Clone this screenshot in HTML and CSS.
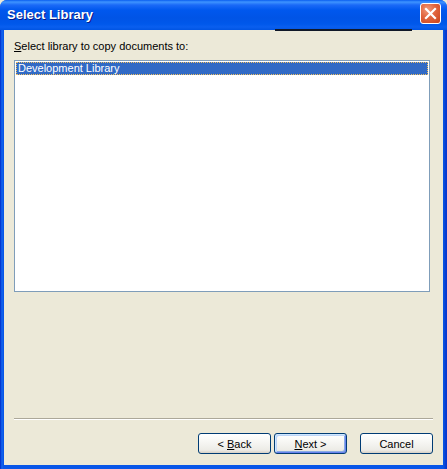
FILE: index.html
```html
<!DOCTYPE html>
<html>
<head>
<meta charset="utf-8">
<link rel="stylesheet" href="styles.css">
</head>
<body>
<div class="window">
  <div class="titlebar">
    <span class="title">Select Library</span>
    <span class="close">
      <svg width="13" height="13" viewBox="0 0 13 13"><path d="M2 2 L11 11 M11 2 L2 11" stroke="#fff" stroke-width="2.2" stroke-linecap="square"/></svg>
    </span>
  </div>
  <div class="frame">
    <div class="client">
      <div class="glitch"></div>
      <div class="label"><u>S</u>elect library to copy documents to:</div>
      <div class="list">
        <div class="item">Development Library</div>
      </div>
      <div class="spacer"></div>
      <div class="separator"></div>
      <div class="buttons">
        <button class="btn">&lt; <u>B</u>ack</button>
        <button class="btn default"><u>N</u>ext &gt;</button>
        <button class="btn cancel">Cancel</button>
      </div>
    </div>
  </div>
</div>
</body>
</html>
```
FILE: styles.css
```css
html, body {
  margin: 0;
  padding: 0;
  background: #ece9d8;
}
body {
  width: 447px;
  height: 469px;
  overflow: hidden;
  font-family: "Liberation Sans", Arial, sans-serif;
  font-size: 11px;
}
.window {
  width: 447px;
  height: 469px;
  display: flex;
  flex-direction: column;
  background: #0855dd;
  border-radius: 7px 7px 0 0;
  overflow: hidden;
}
.titlebar {
  height: 30px;
  flex: none;
  display: flex;
  align-items: center;
  padding: 0 6px 0 7px;
  background: linear-gradient(#0a5ef0 0px, #3e94ff 2px, #1b6af7 5px, #0058ee 10px, #0054e6 18px, #0058eb 24px, #0a5fef 27px, #0054e3 30px);
  box-sizing: border-box;
}
.title {
  flex: 1;
  color: #fff;
  font-weight: bold;
  font-size: 13px;
  text-shadow: 1px 1px 0 #0a1883;
  margin-top: -1px;
}
.close {
  width: 19px;
  height: 19px;
  margin-top: -3px;
  margin-right: 0;
  border: 1px solid #fff;
  border-radius: 3px;
  background: radial-gradient(circle at 35% 30%, #f19a7c 0, #e0643d 45%, #c9431c 100%);
  display: flex;
  align-items: center;
  justify-content: center;
}
.frame {
  flex: 1;
  display: flex;
  padding: 0 4px 4px 4px;
  background: linear-gradient(90deg, #0029c4 0, #0847e0 1px, #166aee 2px, #0856e8 3px, #0856e8 443px, #0a50dc 444px, #0838cf 446px);
}
.client {
  flex: 1;
  background: #ece9d8;
  display: flex;
  flex-direction: column;
  padding: 0 10px 11px 10px;
  position: relative;
}
.glitch {
  position: absolute;
  left: 271px;
  top: -1px;
  width: 137px;
  height: 2px;
  background: #101828;
}
.label {
  margin-top: 10px;
  line-height: 13px;
  color: #000;
}
.list {
  margin-top: 7px;
  width: 412px;
  height: 228px;
  border: 1px solid #7f9db9;
  background: #fff;
  padding: 1px;
  box-sizing: content-box;
}
.item {
  height: 13px;
  line-height: 13px;
  background: #316ac5;
  color: #fff;
  padding-left: 2px;
  outline: 1px dotted #f0c060;
  outline-offset: -1px;
}
.spacer {
  flex: 1;
}
.separator {
  height: 1px;
  background: #aca899;
  border-bottom: 1px solid #fff;
}
.buttons {
  margin-top: 13px;
  display: flex;
  justify-content: flex-end;
}
.btn {
  width: 73px;
  height: 21px;
  padding: 0;
  margin: 0 0 0 3px;
  border: 1px solid #003c74;
  border-radius: 3px;
  background: linear-gradient(#ffffff 0, #f7f7f4 40%, #ecebe6 85%, #d6d0c5 100%);
  font-family: "Liberation Sans", Arial, sans-serif;
  font-size: 11px;
  color: #000;
  box-sizing: border-box;
}
.btn.default {
  box-shadow: inset 0 0 0 1px #cee7ff, inset 0 -1px 0 2px #6982ee;
  box-shadow: inset 1px 1px 0 #cee7ff, inset -1px -1px 0 #6982ee, inset 2px 2px 0 #bcd4f6, inset -2px -2px 0 #89ade4;
}
.btn.cancel {
  margin-left: 13px;
}
```
